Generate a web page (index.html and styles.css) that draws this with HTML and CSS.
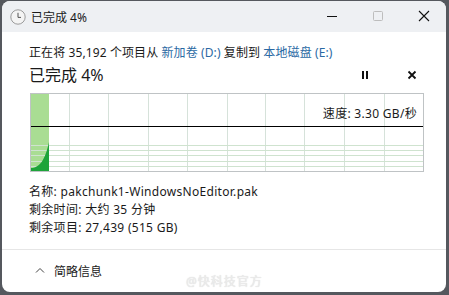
FILE: index.html
```html
<!DOCTYPE html>
<html lang="zh-CN">
<head>
  <meta charset="UTF-8" />
  <meta name="viewport" content="width=device-width, initial-scale=1.0" />
  <title>已完成 4%</title>
  <link rel="stylesheet" href="styles.css">
</head>
<body>
  <div class="window">
    <div class="titlebar">
      <svg class="app-icon" width="16" height="16" viewBox="0 0 16 16">
        <circle cx="8" cy="8" r="7.2" fill="#f4f4f4" stroke="#9a9a9a" stroke-width="1"/>
        <path d="M8 3.8 V8.4 H11" fill="none" stroke="#555" stroke-width="1"/>
      </svg>
      <span class="title">已完成 4%</span>
      <div class="caption-buttons">
        <svg class="cap" width="46" height="30" viewBox="0 0 46 30"><path d="M18 15.5 H28" stroke="#111" stroke-width="1"/></svg>
        <svg class="cap" width="46" height="30" viewBox="0 0 46 30"><rect x="18.5" y="10.5" width="9" height="9" rx="1" fill="none" stroke="#bdbdbd" stroke-width="1"/></svg>
        <svg class="cap" width="46" height="30" viewBox="0 0 46 30"><path d="M18 10 L28 20 M28 10 L18 20" stroke="#111" stroke-width="1.1"/></svg>
      </div>
    </div>

    <div class="content">
      <p class="from-to">正在将 35,192 个项目从 <span class="link">新加卷 (D:)</span> 复制到 <span class="link">本地磁盘 (E:)</span></p>
      <div class="heading-row">
        <h1>已完成 4%</h1>
        <div class="actions">
          <svg width="10" height="10" viewBox="0 0 10 10"><rect x="2" y="1" width="2" height="8" fill="#111"/><rect x="6" y="1" width="2" height="8" fill="#111"/></svg>
          <svg width="10" height="10" viewBox="0 0 10 10"><path d="M1.5 1.5 L8.5 8.5 M8.5 1.5 L1.5 8.5" stroke="#111" stroke-width="1.8"/></svg>
        </div>
      </div>

      <div class="graph">
        <svg width="392" height="77" viewBox="0 0 392 77">
          <rect x="0" y="0" width="18" height="77" fill="#a9dd93"/>
          <g stroke="#d6e2da" stroke-width="1">
            <path d="M38.5 0 V77 M77.5 0 V77 M117.5 0 V77 M156.5 0 V77 M196.5 0 V77 M234.5 0 V77 M273.5 0 V77 M313.5 0 V77 M353.5 0 V77"/>
          </g>
          <g stroke="#cfe3cf" stroke-width="1">
            <path d="M0 51.5 H392 M0 56.5 H392 M0 61.5 H392 M0 67.5 H392 M0 72.5 H392"/>
          </g>
          <path d="M0 77 L0 74 C8 74 14 67 18 48 L18 77 Z" fill="#1ea43a"/>
          <path d="M0 32.5 H392" stroke="#000" stroke-width="1.2"/>
        </svg>
        <span class="speed">速度: 3.30 GB/秒</span>
      </div>

      <div class="details">
        <p>名称: pakchunk1-WindowsNoEditor.pak</p>
        <p>剩余时间: 大约 35 分钟</p>
        <p>剩余项目: 27,439 (515 GB)</p>
      </div>
    </div>

    <div class="footer">
      <svg class="chevron" width="10" height="6" viewBox="0 0 10 6"><path d="M1 5.5 L5 1.5 L9 5.5" fill="none" stroke="#444" stroke-width="1"/></svg>
      <span>简略信息</span>
      <span class="watermark">@快科技官方</span>
    </div>
  </div>
</body>
</html>
```

FILE: styles.css
```css
html, body {
  margin: 0;
  height: 100%;
}
body {
  background: #55585e;
  font-family: "Noto Sans", "Noto Sans CJK SC", sans-serif;
  color: #1a1a1a;
  overflow: hidden;
}
.window {
  margin: 1px 0 0 2px;
  width: 444px;
  height: 291px;
  background: #fff;
  border-radius: 8px;
  overflow: hidden;
  display: flex;
  flex-direction: column;
}
.titlebar {
  height: 31px;
  flex: none;
  background: #eef0f3;
  display: flex;
  align-items: center;
}
.app-icon {
  margin-left: 8px;
}
.title {
  margin-left: 5px;
  font-size: 12px;
  flex: 1;
}
.caption-buttons {
  display: flex;
  align-self: flex-start;
  margin-right: -1px;
}
.cap {
  display: block;
}
.content {
  padding: 12px 24px 0 27px;
  flex: 1;
}
.from-to {
  margin: 0;
  font-size: 12px;
  line-height: 18px;
  letter-spacing: 0.1px;
}
.link {
  color: #2a69a3;
}
.heading-row {
  display: flex;
  align-items: center;
  margin-top: 2px;
  height: 22px;
}
h1 {
  margin: 0;
  font-size: 16px;
  font-weight: normal;
  line-height: 22px;
  flex: 1;
}
.actions {
  display: flex;
  gap: 37px;
  margin-right: 5px;
}
.actions svg {
  display: block;
}
.graph {
  position: relative;
  margin-top: 7px;
  margin-left: 1px;
  width: 392px;
  height: 77px;
  border: 1px solid #bfc3c5;
}
.graph svg {
  display: block;
}
.speed {
  position: absolute;
  right: 6px;
  top: 12px;
  font-size: 12px;
  line-height: 16px;
  letter-spacing: 0.3px;
}
.details {
  margin-top: 11px;
}
.details p {
  margin: 0;
  font-size: 12px;
  line-height: 18px;
  letter-spacing: 0.3px;
}
.footer {
  position: relative;
  height: 42px;
  flex: none;
  border-top: 1px solid #e6e6e6;
  display: flex;
  align-items: center;
  padding-left: 33px;
  font-size: 12px;
}
.chevron {
  margin-right: 9px;
  margin-top: -2px;
}
.watermark {
  position: absolute;
  left: 184px;
  top: 22px;
  font-size: 12px;
  color: #ececec;
  text-shadow: 0 0 1px #d0d0d0;
  letter-spacing: 1px;
}
```
